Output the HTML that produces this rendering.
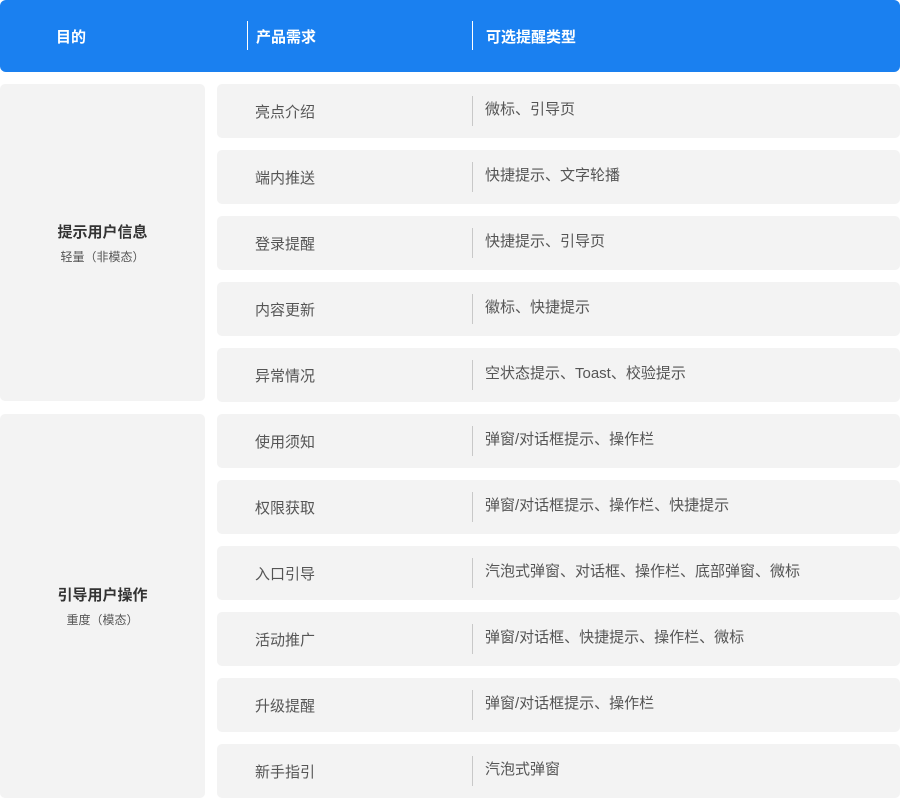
<!DOCTYPE html>
<html><head><meta charset="utf-8"><style>
*{margin:0;padding:0;box-sizing:border-box}
body{width:900px;height:798px;background:#fff;position:relative;overflow:hidden;font-family:"Liberation Sans","Noto Sans CJK SC",sans-serif}
.hd{position:absolute;left:0;top:0;width:900px;height:72px;background:#1a80f0;border-radius:6px;color:#fff;font-size:15px;font-weight:bold}
.hd span{position:absolute;top:26px}
.vl{position:absolute;width:1px}
.l{position:absolute;left:0;width:205px;background:#f3f3f3;border-radius:5px;text-align:center}
.l b{display:block;font-size:15px;color:#333;font-weight:bold}
.l i{display:block;font-style:normal;font-size:12px;color:#555;margin-top:6px}
.r{position:absolute;left:217px;width:683px;height:54px;background:#f3f3f3;border-radius:5px;font-size:15px;color:#555}
.r .a{position:absolute;left:38px;top:17px}
.r .b{position:absolute;left:268px;top:14px}
.r .d{position:absolute;left:255px;top:12px;width:1px;height:30px;background:#c8c8c8}
</style></head><body>
<div class="hd"><span style="left:56px">目的</span><span style="left:256px">产品需求</span><span style="left:486px">可选提醒类型</span>
<div class="vl" style="left:247px;top:21px;height:29px;background:#fff"></div>
<div class="vl" style="left:472px;top:21px;height:29px;background:#fff"></div></div>
<div class="l" style="top:84px;height:317px;padding-top:137px"><b>提示用户信息</b><i>轻量（非模态）</i></div>
<div class="l" style="top:414px;height:384px;padding-top:170px"><b>引导用户操作</b><i>重度（模态）</i></div>
<div class="r" style="top:84px"><span class="a">亮点介绍</span><div class="d"></div><span class="b">微标、引导页</span></div>
<div class="r" style="top:150px"><span class="a">端内推送</span><div class="d"></div><span class="b">快捷提示、文字轮播</span></div>
<div class="r" style="top:216px"><span class="a">登录提醒</span><div class="d"></div><span class="b">快捷提示、引导页</span></div>
<div class="r" style="top:282px"><span class="a">内容更新</span><div class="d"></div><span class="b">徽标、快捷提示</span></div>
<div class="r" style="top:348px"><span class="a">异常情况</span><div class="d"></div><span class="b">空状态提示、Toast、校验提示</span></div>
<div class="r" style="top:414px"><span class="a">使用须知</span><div class="d"></div><span class="b">弹窗/对话框提示、操作栏</span></div>
<div class="r" style="top:480px"><span class="a">权限获取</span><div class="d"></div><span class="b">弹窗/对话框提示、操作栏、快捷提示</span></div>
<div class="r" style="top:546px"><span class="a">入口引导</span><div class="d"></div><span class="b">汽泡式弹窗、对话框、操作栏、底部弹窗、微标</span></div>
<div class="r" style="top:612px"><span class="a">活动推广</span><div class="d"></div><span class="b">弹窗/对话框、快捷提示、操作栏、微标</span></div>
<div class="r" style="top:678px"><span class="a">升级提醒</span><div class="d"></div><span class="b">弹窗/对话框提示、操作栏</span></div>
<div class="r" style="top:744px"><span class="a">新手指引</span><div class="d"></div><span class="b">汽泡式弹窗</span></div>
</body></html>
